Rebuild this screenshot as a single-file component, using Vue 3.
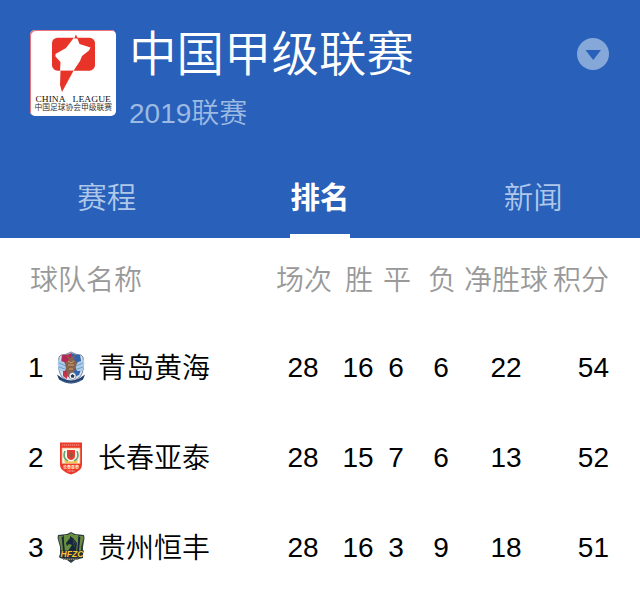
<template>
  <div class="page">
    <header class="header">
      <div class="league">
        <div class="league-logo">
          <svg class="logo-mark" viewBox="0 0 86 60">
            <rect x="22" y="7.7" width="43" height="33" rx="5.5" fill="#e83428" />
            <path d="M46 5 L49.5 14 L60.5 17.5 L59 20.5 L52 26 L50 31 L43.5 40.7 H30 L30.5 32 L25.5 26.5 L25.5 24 L36 18 Z" fill="#fff" />
            <path d="M30.5 40.7 H43.5 L32 62 L30 55 Z" fill="#e83428" />
            <path d="M46 4.5 L47.7 8.5 H44.2 Z" fill="#e83428" />
          </svg>
          <svg class="logo-text" viewBox="0 0 86 26">
            <text x="5.5" y="11.5" textLength="30" lengthAdjust="spacingAndGlyphs" class="logo-en">CHINA</text>
            <text x="42.5" y="11.5" textLength="38.5" lengthAdjust="spacingAndGlyphs" class="logo-en">LEAGUE</text>
            <text x="4.5" y="20" textLength="77.5" lengthAdjust="spacingAndGlyphs" class="logo-cn">中国足球协会甲级联赛</text>
          </svg>
        </div>
        <div class="league-info">
          <h1>中国甲级联赛</h1>
          <p>2019联赛</p>
        </div>
        <button class="toggle">
          <svg viewBox="0 0 32 32">
            <circle cx="16" cy="16" r="16" fill="#85a8d8" />
            <path d="M8.5 12 H24 L16.2 22 Z" fill="#2860ba" />
          </svg>
        </button>
      </div>
      <nav class="tabs">
        <div
          v-for="tab in tabs"
          :key="tab"
          class="tab"
          :class="{ active: tab === activeTab }"
          @click="activeTab = tab"
        >
          <span>{{ tab }}</span>
        </div>
      </nav>
    </header>

    <main class="table">
      <div class="row head">
        <div class="team">球队名称</div>
        <div class="played">场次</div>
        <div class="win">胜</div>
        <div class="draw">平</div>
        <div class="lose">负</div>
        <div class="diff">净胜球</div>
        <div class="points">积分</div>
      </div>
      <div v-for="item in teams" :key="item.rank" class="row">
        <div class="team">
          <span class="rank">{{ item.rank }}</span>
          <svg v-if="item.rank === 1" class="crest" viewBox="0 0 30 34">
            <path d="M5 4 Q10 4 15 1 Q20 4 25 4 L27 6 Q29 20 24 26 L15 32 L6 26 Q1 20 3 6 Z" fill="#d3dfea" stroke="#4a5d85" stroke-width=".7" />
            <path d="M6 4 Q12 4 15 2 V27 L8 24 Q4 13 6 4 Z" fill="#b52a55" />
            <path d="M15 2 Q19 4 24 4 Q27 16 23 24 L15 27 Z" fill="#3264ad" />
            <path d="M2 9 L8 11 L11 15 L9 20 L4 20 Q1 16 2 9 Z M28 9 L22 11 L19 15 L21 20 L26 20 Q29 16 28 9 Z" fill="#a9cce8" />
            <path d="M3 12 L10 15 M3 16 L9 18 M27 12 L20 15 M27 16 L21 18" stroke="#6793c5" stroke-width=".8" />
            <path d="M10 3 L14 7 L19 4 L18 8 L21 12 L19 18 L17 25 H11 L10 18 L9 12 L13 9 Z" fill="#87624d" />
            <path d="M12 10 L15 12 L18 10 M12 14 H18 M13 18 H17" stroke="#d3a068" fill="none" />
            <path d="M7 20 L11 23 L11 28 L7 25 Z" fill="#c93447" />
            <path d="M1 23.5 L6 27 Q15 32 24 27 L29 23.5 L27 28.5 Q15 36.5 3 28.5 Z" fill="#203f70" />
            <path d="M5 29 Q15 34 25 29" stroke="#8fa6c1" stroke-width=".7" stroke-dasharray="1 1" fill="none" />
            <circle cx="16.5" cy="25" r="3.5" fill="#fff" stroke="#52637c" stroke-width=".6" />
            <path d="M16.5 23 L18.5 24.5 L17.8 26.7 H15.3 L14.6 24.5 Z" fill="#263a58" />
          </svg>
          <svg v-else-if="item.rank === 2" class="crest" viewBox="0 0 30 34">
            <path d="M4 1.5 H26 V24 Q26 30 15 33.5 Q4 30 4 24 Z" fill="#ec3829" />
            <path d="M6 4 H24" stroke="#f6aaa0" stroke-dasharray="1.3 .7" />
            <path d="M6 7 H24 V22.5 H6 Z" fill="#fff8e9" stroke="#f3a577" stroke-width=".7" />
            <path d="M9 10 Q6 17 12 20 M21 10 Q24 17 18 20" stroke="#61a478" stroke-width="1.7" fill="none" />
            <path d="M11 9 H19 V15 Q19 18 15 19 Q11 18 11 15 Z" fill="#e43b32" />
            <path d="M15 10 L16 13 L18 13 L15 17 L13 14 L14 13 Z" fill="#99573a" />
            <path d="M8 19 Q15 22 22 19 L21 22 H9 Z" fill="#edc34c" />
            <text x="7" y="28" textLength="16" lengthAdjust="spacingAndGlyphs" class="crest-cn">长春亚泰</text>
            <path d="M11.5 30 H18.5" stroke="#f8c1ba" stroke-dasharray="1 .5" />
          </svg>
          <svg v-else class="crest" viewBox="0 1 30 34">
            <path d="M2 5 L11 4 L15 2 L19 4 L28 5 L28.5 8 L27 17 L27 28 L19 30 L15 33 L11 30 L4 28 L4 17 L1.5 8 Z" fill="#303d43" />
            <path d="M3 6 H6.5 L8 23 L5 24 L5 17 L2.5 8 Z M23.5 6 H27 L27.5 8 L25 17 L25 23 H22 Z" fill="#6b8c42" />
            <path d="M8 5 H12 L15 3 L18 5 H22 L22.5 17 L20 23 H9 L7.5 17 Z" fill="#67913c" />
            <path d="M10 13 L14 8 L14 6 L17 8 L21 13 L20 21 H12 L16 15 L13 14 L11 16 Z" fill="#17263c" />
            <path d="M17 10 L20 14 M17 12 L19 17" stroke="#425c39" stroke-width=".7" />
            <path d="M6.5 7 L8 21 M23.5 7 L22 21" stroke="#18263d" stroke-width="1.8" />
            <path d="M3 27 L5 20.5 H28 L26 28 H4 Z" fill="#292e3b" />
            <text x="4.5" y="27" textLength="23" lengthAdjust="spacingAndGlyphs" class="crest-en">HFZC</text>
            <path d="M7 29.3 H23" stroke="#a28b52" stroke-width="1.5" stroke-dasharray="1.3 .7" />
          </svg>
          <span class="name">{{ item.name }}</span>
        </div>
        <div class="played">{{ item.played }}</div>
        <div class="win">{{ item.win }}</div>
        <div class="draw">{{ item.draw }}</div>
        <div class="lose">{{ item.lose }}</div>
        <div class="diff">{{ item.diff }}</div>
        <div class="points">{{ item.points }}</div>
      </div>
    </main>
  </div>
</template>

<script setup>
import { ref } from 'vue'

const tabs = ['赛程', '排名', '新闻']
const activeTab = ref('排名')

const teams = ref([
  { rank: 1, name: '青岛黄海', played: 28, win: 16, draw: 6, lose: 6, diff: 22, points: 54 },
  { rank: 2, name: '长春亚泰', played: 28, win: 15, draw: 7, lose: 6, diff: 13, points: 52 },
  { rank: 3, name: '贵州恒丰', played: 28, win: 16, draw: 3, lose: 9, diff: 18, points: 51 }
])
</script>

<style>
body {
  margin: 0;
  background: #fff;
}
</style>

<style scoped>
.page {
  width: 640px;
  height: 592px;
  overflow: hidden;
  background: #fff;
  font-family: "Liberation Sans", "Noto Sans CJK SC", sans-serif;
  font-size: 28px;
  font-weight: 350;
  color: #000;
}

.header {
  display: flex;
  flex-direction: column;
  height: 238px;
  background: #2860ba;
}

.league {
  display: flex;
  height: 158px;
  padding: 0 31px 0 30px;
}

.league-logo {
  display: flex;
  flex-direction: column;
  box-sizing: border-box;
  width: 86px;
  height: 86px;
  margin-top: 30px;
  background: #fff;
  border-radius: 5px;
  box-shadow: inset 1px 1px 0 #e8747c;
}

.logo-mark {
  width: 86px;
  height: 60px;
  flex: none;
  overflow: visible;
}

.logo-text {
  width: 86px;
  height: 26px;
}

.logo-en {
  font-family: "Liberation Serif", serif;
  font-size: 8.7px;
  font-weight: 400;
  fill: #111;
}

.logo-cn {
  font-size: 7.8px;
  fill: #222;
}

.league-info {
  flex: 1;
  margin: 19px 0 0 13px;
}

.league-info h1 {
  margin: 0;
  font-size: 47.5px;
  line-height: 72px;
  font-weight: 350;
  color: #fff;
}

.league-info p {
  margin: 3px 0 0;
  line-height: 40px;
  color: #9cbae2;
}

.toggle {
  width: 32px;
  height: 32px;
  margin-top: 38px;
  padding: 0;
  border: none;
  background: none;
}

.toggle svg {
  display: block;
}

.tabs {
  display: flex;
  height: 80px;
}

.tab {
  display: flex;
  flex: 1;
  justify-content: center;
  font-size: 29.5px;
  color: #afc8e9;
}

.tab span {
  box-sizing: border-box;
  height: 80px;
  line-height: 80px;
}

.tab.active {
  color: #fff;
  font-weight: 700;
}

.tab.active span {
  width: 60px;
  text-align: center;
  border-bottom: 4px solid #fff;
}

.row {
  display: flex;
  align-items: center;
  height: 90px;
  padding-left: 28px;
  line-height: 40px;
  white-space: nowrap;
}

.row > div {
  text-align: center;
}

.row.head {
  box-sizing: border-box;
  height: 85px;
  padding-top: 1px;
  color: #999;
}

.row .team {
  display: flex;
  align-items: center;
  width: 248px;
}

.head .team {
  box-sizing: border-box;
  padding-left: 2px;
}

.rank {
  width: 28px;
  text-align: left;
}

.crest {
  width: 30px;
  height: 34px;
}

.crest-cn {
  font-size: 4px;
  font-weight: 700;
  fill: #ffe2d8;
}

.crest-en {
  font-size: 8.5px;
  font-weight: 700;
  font-style: italic;
  fill: #f5c52f;
}

.name {
  margin-left: 12px;
  padding-top: 1px;
}

.played {
  width: 56px;
}

.row:not(.head) .played {
  text-indent: -2px;
}

.win {
  width: 32px;
  margin-left: 11px;
}

.row:not(.head) .win {
  text-indent: -2px;
}

.draw {
  width: 28px;
  margin-left: 8px;
}

.lose {
  width: 28px;
  margin-left: 17px;
}

.row:not(.head) .draw,
.row:not(.head) .lose {
  text-indent: -2px;
}

.diff {
  width: 84px;
  margin-left: 8px;
}

.points {
  width: 56px;
  margin-left: 5px;
}

.row .points {
  text-align: right;
}
</style>
